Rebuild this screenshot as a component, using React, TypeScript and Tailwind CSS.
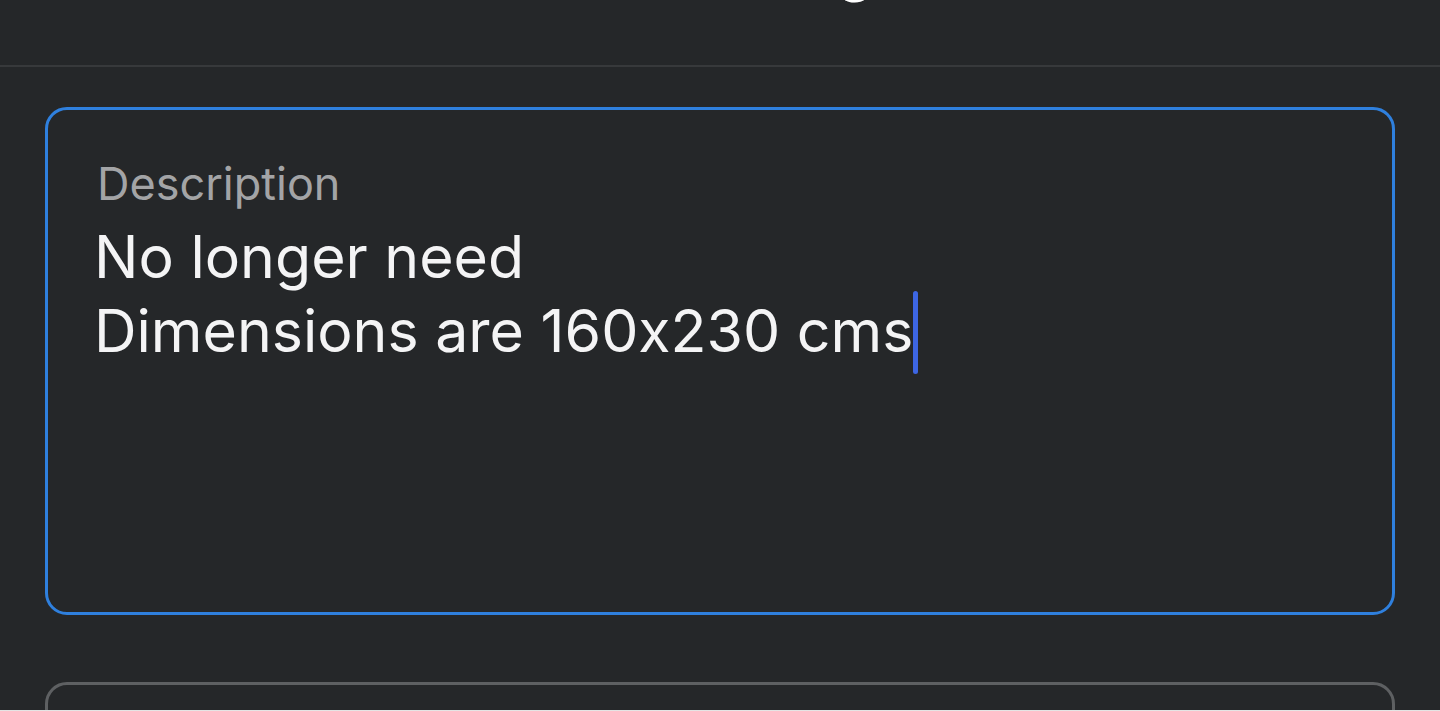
export default function App() {
  return (
    <div className="flex h-[711px] flex-col overflow-hidden bg-[#252729] font-['Inter','Noto_Sans',sans-serif] [font-feature-settings:'calt'_0]">
      {/* header, only the tail of the title shows */}
      <header className="h-[67px] shrink-0 overflow-hidden border-b-2 border-[#37393b]">
        <h1 className="-mt-[60px] pl-[582px] text-[58px] font-semibold leading-none text-white">
          Edit listing
        </h1>
      </header>

      <div className="flex-1 overflow-hidden px-[45px] pt-[40px]">
        <div className="h-[508px] rounded-[22px] border-[3px] border-[#2f80de] pl-[46px] pt-[51px]">
          <div className="ml-[3px] text-[45px] leading-none text-[#a3a4a6]">Description</div>
          <div className="mt-[14px] text-[59px] leading-[74px] text-[#f4f4f5]">
            <div>No longer need</div>
            <div>
              <span className="relative">
                Dimensions are 160x230 cms
                <span className="absolute left-full top-[-4px] h-[83px] w-[5px] rounded-full bg-[#3d66e3]" />
              </span>
            </div>
          </div>
        </div>

        <div className="mt-[67px] h-[200px] rounded-[22px] border-[3px] border-[#5e6062]" />
      </div>
      <div className="h-px shrink-0 bg-[#e4e4e4]" />
    </div>
  );
}
